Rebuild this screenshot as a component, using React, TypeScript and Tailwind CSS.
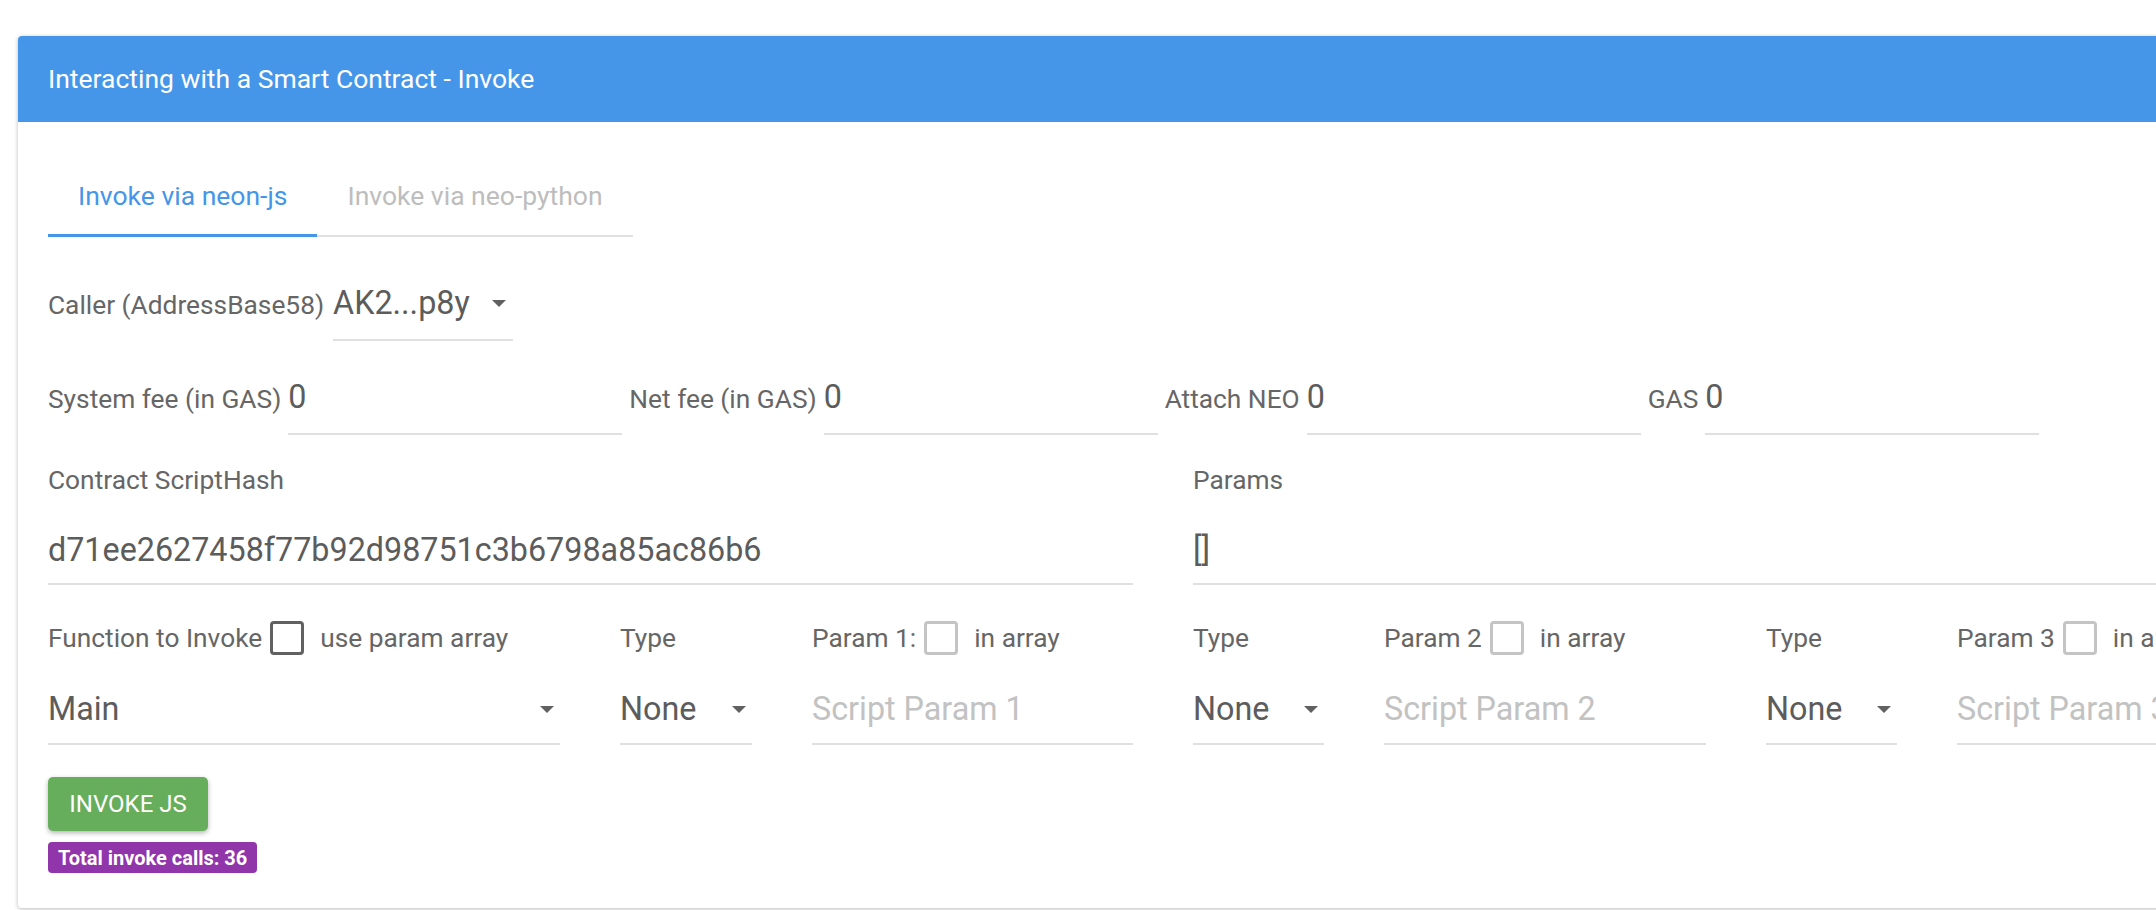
import React from "react";

const Arrow = () => (
  <svg width="14" height="7" viewBox="0 0 14 7" className="shrink-0">
    <path d="M0 0h14L7 7z" fill="#616161" />
  </svg>
);

const Check = ({ dark }: { dark?: boolean }) => (
  <span
    className={
      dark
        ? "ml-[8px] mr-[16px] box-border h-[34px] w-[34px] shrink-0 rounded-[4px] border-[3px] border-[#616161]"
        : "ml-[8px] mr-[16px] box-border h-[34px] w-[34px] shrink-0 rounded-[4px] border-[3px] border-[#c4c4c4]"
    }
  />
);

const LabelRow = ({ children }: { children: React.ReactNode }) => (
  <div className="flex h-[34px] items-center whitespace-nowrap text-[26.3px] leading-[30px] text-[#666]">
    {children}
  </div>
);

const SelectBox = ({ value }: { value: string }) => (
  <div className="mt-[34px] flex items-center justify-between border-b-2 border-[#e0e0e0] pb-[14px]">
    <span className="text-[32.3px] leading-[40px] text-[#5c5c5c]">{value}</span>
    <span className="mr-[6px]">
      <Arrow />
    </span>
  </div>
);

const ParamBox = ({ ph }: { ph: string }) => (
  <div className="mt-[34px] border-b-2 border-[#e0e0e0] pb-[14px]">
    <span className="whitespace-nowrap text-[32.3px] leading-[40px] text-[#c2c2c2]">{ph}</span>
  </div>
);

const FeeField = ({ label }: { label: string }) => (
  <div className="flex items-baseline">
    <span className="whitespace-nowrap text-[26.3px] leading-[30px] text-[#666]">{label}</span>
    <div className="ml-[7px] mr-[7px] w-[334px] border-b-2 border-[#e0e0e0] pb-[16px]">
      <span className="text-[32.3px] leading-[40px] text-[#5c5c5c]">0</span>
    </div>
  </div>
);

export default function App() {
  return (
    <div className="h-[910px] w-[2156px] overflow-hidden bg-white pl-[18px] pt-[36px] font-['Roboto','Liberation_Sans',sans-serif]">
      <div className="w-[2294px] shrink-0 overflow-hidden rounded-[4px] bg-white shadow-[0_1px_4px_rgba(0,0,0,0.28)]">
        <div className="flex h-[86px] items-center bg-[#4596e9] px-[30px] text-[26.5px] text-white">
          Interacting with a Smart Contract - Invoke
        </div>
        <div className="px-[30px] pb-[35px] pt-[35px]">
          <div className="flex items-end">
            <div className="box-border flex h-[80px] items-center border-b-[3px] border-[#4596e9] px-[30px] text-[26.5px] text-[#4596e9]">
              Invoke via neon-js
            </div>
            <div className="box-border flex h-[80px] items-center border-b-2 border-[#e0e0e0] px-[30px] text-[26.5px] text-[#bdbdbd]">
              Invoke via neo-python
            </div>
          </div>

          <div className="mt-[46px] flex items-baseline">
            <span className="text-[26.3px] leading-[30px] text-[#666]">Caller (AddressBase58)</span>
            <div className="ml-[9px] flex w-[180px] items-center justify-between border-b-2 border-[#e0e0e0] pb-[16px]">
              <span className="text-[32.3px] leading-[40px] text-[#5c5c5c]">AK2...p8y</span>
              <span className="mr-[7px]">
                <Arrow />
              </span>
            </div>
          </div>

          <div className="mt-[36px] flex items-baseline">
            <FeeField label="System fee (in GAS)" />
            <FeeField label="Net fee (in GAS)" />
            <FeeField label="Attach NEO" />
            <FeeField label="GAS" />
          </div>

          <div className="mt-[30px] grid grid-cols-[512px_132px_321px_131px_322px_131px_322px] gap-x-[60px]">
            <div className="col-span-3">
              <div className="text-[26.3px] leading-[30px] text-[#666]">Contract ScriptHash</div>
              <div className="mt-[35px] border-b-2 border-[#e0e0e0] pb-[13px] text-[32.3px] leading-[40px] text-[#5c5c5c]">
                d71ee2627458f77b92d98751c3b6798a85ac86b6
              </div>
            </div>
            <div className="col-span-4">
              <div className="text-[26.3px] leading-[30px] text-[#666]">Params</div>
              <div className="mt-[35px] border-b-2 border-[#e0e0e0] pb-[13px] text-[32.3px] leading-[40px] text-[#5c5c5c]">
                []
              </div>
            </div>
          </div>

          <div className="mt-[36px] grid grid-cols-[512px_132px_321px_131px_322px_131px_322px] gap-x-[60px]">
            <div>
              <LabelRow>
                Function to Invoke
                <Check dark />
                use param array
              </LabelRow>
              <SelectBox value="Main" />
            </div>
            <div>
              <LabelRow>Type</LabelRow>
              <SelectBox value="None" />
            </div>
            <div>
              <LabelRow>
                Param 1:
                <Check />
                in array
              </LabelRow>
              <ParamBox ph="Script Param 1" />
            </div>
            <div>
              <LabelRow>Type</LabelRow>
              <SelectBox value="None" />
            </div>
            <div>
              <LabelRow>
                Param 2
                <Check />
                in array
              </LabelRow>
              <ParamBox ph="Script Param 2" />
            </div>
            <div>
              <LabelRow>Type</LabelRow>
              <SelectBox value="None" />
            </div>
            <div>
              <LabelRow>
                Param 3
                <Check />
                in array
              </LabelRow>
              <ParamBox ph="Script Param 3" />
            </div>
          </div>

          <button className="mt-[32px] flex h-[54px] w-[160px] items-center justify-center rounded-[5px] bg-[#66ad5c] text-[24px] uppercase text-white shadow-[0_2px_5px_rgba(0,0,0,0.3)]">
            Invoke JS
          </button>
          <div className="mt-[11px] flex h-[31px] w-fit items-center rounded-[4px] bg-[#9035aa] px-[10px] text-[20px] font-bold text-white">
            Total invoke calls: 36
          </div>
        </div>
      </div>
    </div>
  );
}
